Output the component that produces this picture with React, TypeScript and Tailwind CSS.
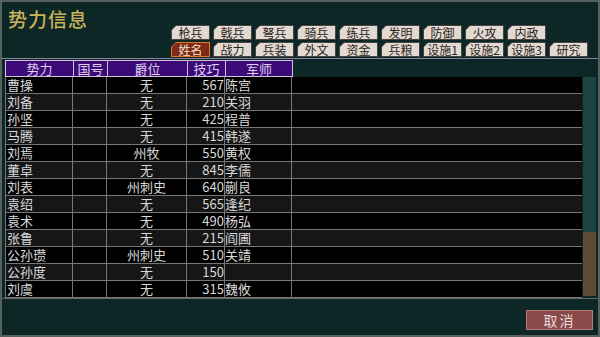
import React from "react";

const tabsTop = ["枪兵", "戟兵", "弩兵", "骑兵", "练兵", "发明", "防御", "火攻", "内政"];
const tabsBottom = ["姓名", "战力", "兵装", "外文", "资金", "兵粮", "设施1", "设施2", "设施3", "研究"];

const rows = [
  ["曹操", "无", "567", "陈宫"],
  ["刘备", "无", "210", "关羽"],
  ["孙坚", "无", "425", "程普"],
  ["马腾", "无", "415", "韩遂"],
  ["刘焉", "州牧", "550", "黄权"],
  ["董卓", "无", "845", "李儒"],
  ["刘表", "州刺史", "640", "蒯良"],
  ["袁绍", "无", "565", "逢纪"],
  ["袁术", "无", "490", "杨弘"],
  ["张鲁", "无", "215", "阎圃"],
  ["公孙瓒", "州刺史", "510", "关靖"],
  ["公孙度", "无", "150", ""],
  ["刘虞", "无", "315", "魏攸"],
];

const headers = ["势力", "国号", "爵位", "技巧", "军师"];

// tab with a cut top-left corner: dark outline layer, light face layer, label on top
function Tab({ label, active }: { label: string; active?: boolean }) {
  return (
    <div className="relative w-[39px] h-[15px] flex items-center justify-center">
      <div
        className={
          "absolute inset-0 [clip-path:polygon(5px_0,100%_0,100%_100%,0_100%,0_5px)] " +
          (active ? "bg-[#e2782e]" : "bg-[#4a4440]")
        }
      ></div>
      <div
        className={
          "absolute inset-px [clip-path:polygon(4px_0,100%_0,100%_100%,0_100%,0_4px)] " +
          (active ? "bg-[#7e2a14]" : "bg-[#e2dad2]")
        }
      ></div>
      <span
        className={
          "relative text-[12px] leading-[13px] " + (active ? "text-[#f2e2d2]" : "text-[#2a2420]")
        }
      >
        {label}
      </span>
    </div>
  );
}

export default function App() {
  return (
    <div
      className="w-[600px] h-[337px] bg-[#0d2726] border-2 border-[#56625f] flex flex-col overflow-hidden"
      style={{ fontFamily: '"Noto Sans CJK SC", "Noto Sans", sans-serif' }}
    >
      {/* title + tabs */}
      <div className="h-[56px] flex shrink-0">
        <div className="w-[169px] pl-[6px] pt-[6px] text-[19px] leading-[22px] font-medium text-[#c9b25c] tracking-[1px]">
          势力信息
        </div>
        <div className="flex flex-col gap-[2px] pt-[23px]">
          <div className="flex gap-[3px]">
            {tabsTop.map((t) => (
              <Tab key={t} label={t} />
            ))}
          </div>
          <div className="flex gap-[3px]">
            {tabsBottom.map((t, i) => (
              <Tab key={t} label={t} active={i === 0} />
            ))}
          </div>
        </div>
      </div>

      {/* table */}
      <div className="border-t border-[#8a82a6] h-[240px] flex shrink-0 pl-[3px] pt-px">
        <div className="w-[577px] flex flex-col">
          <div className="flex h-[17px]">
            {headers.map((h, i) => (
              <div
                key={h}
                className={
                  "h-[17px] bg-[#3c0a76] border border-[#cdc2dc] -ml-px first:ml-0 flex items-center justify-center text-[13px] leading-[15px] text-[#dcd0ee] " +
                  ["w-[69px]", "w-[35px]", "w-[81px]", "w-[39px]", "w-[68px]"][i]
                }
              >
                {h}
              </div>
            ))}
          </div>
          {rows.map((r, i) => (
            <div
              key={r[0]}
              className={
                "flex h-[17px] border-b border-[#767676] text-[13px] leading-[16px] text-[#d8d8d8] " +
                (i % 2 === 0 ? "bg-black" : "bg-[#161616]")
              }
            >
              <div className="w-[68px] border-l border-r border-[#767676] pl-px whitespace-nowrap">{r[0]}</div>
              <div className="w-[34px] border-r border-[#767676]"></div>
              <div className="w-[80px] border-r border-[#767676] text-center">{r[1]}</div>
              <div className="w-[38px] border-r border-[#767676] text-right">{r[2]}</div>
              <div className="w-[67px] border-r border-[#767676]">{r[3]}</div>
              <div className="flex-1"></div>
            </div>
          ))}
        </div>
        <div className="w-[13px] mt-[17px] h-[219px] flex flex-col ml-px">
          <div className="h-[155px] bg-[#1d4443]"></div>
          <div className="flex-1 bg-[#5a4b31]"></div>
        </div>
      </div>

      {/* bottom */}
      <div className="flex-1 border-t border-[#5e6a68] flex justify-end items-start pt-[11px] pr-[5px]">
        <button className="w-[67px] h-[20px] bg-[#8a4a4a] border border-[#b67c7a] text-[14px] leading-none text-[#eadada] tracking-[2px]">
          取消
        </button>
      </div>
    </div>
  );
}
